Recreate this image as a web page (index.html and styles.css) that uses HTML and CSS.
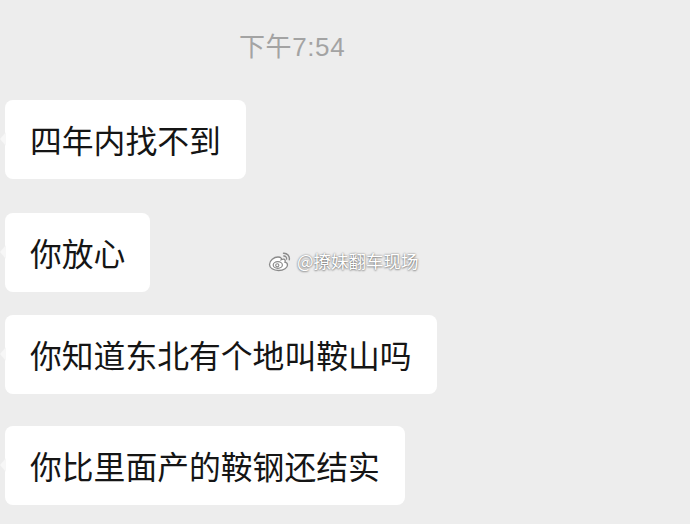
FILE: index.html
```html
<!DOCTYPE html>
<html lang="zh-CN">

<head>
    <meta charset="UTF-8">
    <meta name="viewport" content="width=device-width, initial-scale=1.0">
    <title>聊天记录</title>
    <link rel="stylesheet" href="styles.css">
</head>

<body>
    <div class="chat">
        <div class="time">下午7:54</div>

        <div class="msg msg-first">
            <div class="bubble">四年内找不到</div>
        </div>
        <div class="msg msg-second">
            <div class="bubble">你放心</div>
        </div>
        <div class="msg msg-third">
            <div class="bubble">你知道东北有个地叫鞍山吗</div>
        </div>
        <div class="msg msg-fourth">
            <div class="bubble">你比里面产的鞍钢还结实</div>
        </div>
    </div>

    <!-- watermark over the chat -->
    <div class="watermark">
        <svg class="weibo" width="24" height="22" viewBox="0 0 24 22">
            <path d="M10 7c-4 0-8.5 3.5-8.5 7.5C1.5 18 5.5 20.5 10.5 20.5c5.5 0 9-3 9-5.5 0-1.8-1.6-2.6-2.6-2.8 0.6-1.4 0.5-3-1.5-3-1.2 0-2.2 0.5-2.2 0.5 0.4-1.4 0-2.7-3.2-2.7z"
                fill="#fff" stroke="#8a8a8a" stroke-width="1.3" />
            <ellipse cx="9.8" cy="15" rx="4.6" ry="3.3" fill="#fff" stroke="#8a8a8a" stroke-width="1.2" />
            <circle cx="9.3" cy="15.3" r="1.6" fill="none" stroke="#8a8a8a" stroke-width="1.1" />
            <path d="M15.5 3.2a5.5 5.5 0 0 1 5.8 6.5" fill="none" stroke="#8a8a8a" stroke-width="1.4" stroke-linecap="round" />
            <path d="M15.8 6a2.6 2.6 0 0 1 2.8 3.1" fill="none" stroke="#8a8a8a" stroke-width="1.3" stroke-linecap="round" />
        </svg>
        <span>@撩妹翻车现场</span>
    </div>
</body>

</html>
```

FILE: styles.css
```css
body {
    font-family: "Noto Sans CJK SC", "Noto Sans", sans-serif;
    background-color: #ededed;
    margin: 0;
    padding: 0;
    width: 690px;
    height: 524px;
    overflow: hidden;
}

.chat {
    display: flex;
    flex-direction: column;
    align-items: flex-start;
    padding-top: 31px;
}

.time {
    margin-left: 239px;
    font-family: "Liberation Sans", "Noto Sans CJK SC", sans-serif;
    font-size: 26px;
    line-height: 32px;
    letter-spacing: 0.6px;
    color: #a3a3a3;
}

.msg {
    padding-left: 5px;
}

.msg-first {
    margin-top: 37px;
}

.msg-second {
    margin-top: 34px;
}

.msg-third {
    margin-top: 23px;
}

.msg-fourth {
    margin-top: 32px;
}

.bubble {
    position: relative;
    background-color: #fff;
    border-radius: 8px;
    padding: 18px 25px 19px 25px;
    font-size: 31.8px;
    line-height: 42px;
    color: #151515;
    white-space: nowrap;
}

.bubble::before {
    content: "";
    position: absolute;
    left: -5px;
    top: 32px;
    border-top: 7px solid transparent;
    border-bottom: 7px solid transparent;
    border-right: 6px solid #f7f7f7;
}

.watermark {
    position: absolute;
    left: 268px;
    top: 249px;
    display: flex;
    align-items: center;
    gap: 5px;
    font-size: 17.5px;
    line-height: 24px;
    color: #fff;
    text-shadow: 0 0 2px rgba(0, 0, 0, 0.55), 0 1px 2px rgba(0, 0, 0, 0.3);
}
```
